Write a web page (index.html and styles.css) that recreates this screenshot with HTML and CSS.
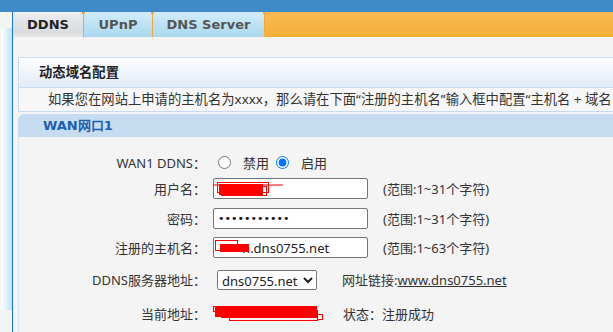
FILE: index.html
```html
<!DOCTYPE html>
<html lang="zh-CN">
  <head>
    <meta charset="UTF-8" />
    <title>DDNS</title>
    <link rel="stylesheet" href="styles.css">
  </head>
  <body>
    <div class="top-bar"></div>
    <div class="main">
      <div class="sidebar"><div class="sidebar-strip"></div></div>
      <div class="content">
        <div class="tab-bar">
          <div class="tab tab-active">DDNS</div>
          <div class="tab">UPnP</div>
          <div class="tab tab-wide">DNS Server</div>
          <div class="tab-fill"></div>
        </div>

        <div class="panel">
          <div class="panel-title">动态域名配置</div>
          <div class="panel-desc">如果您在网站上申请的主机名为xxxx，那么请在下面“注册的主机名”输入框中配置“主机名 + 域名</div>
        </div>

        <div class="section">
          <div class="section-title">WAN网口1</div>
          <div class="section-body">
            <div class="form-row row-radio">
              <div class="form-label">WAN1 DDNS：</div>
              <div class="form-field">
                <input type="radio" name="ddns" class="radio" />
                <span class="radio-text">禁用</span>
                <input type="radio" name="ddns" class="radio" checked />
                <span class="radio-text">启用</span>
              </div>
            </div>

            <div class="form-row row-input">
              <div class="form-label">用户名：</div>
              <div class="form-field">
                <div class="input-wrap">
                  <input type="text" class="form-input" value="" />
                  <svg class="mark mark-user" width="76" height="16" viewBox="0 0 76 16">
                    <line x1="0" y1="4" x2="70" y2="4" stroke="#f00" stroke-width="1" />
                    <rect x="6" y="3" width="44" height="11" fill="#f00" />
                    <rect x="4.5" y="1.5" width="51" height="10" fill="none" stroke="#f00" />
                    <rect x="8.5" y="5.5" width="45" height="9" fill="none" stroke="#f00" />
                  </svg>
                </div>
                <span class="form-hint">(范围:1~31个字符)</span>
              </div>
            </div>

            <div class="form-row row-input row-tall">
              <div class="form-label">密码：</div>
              <div class="form-field">
                <input type="password" class="form-input form-password" value="abcdefghijk" />
                <span class="form-hint">(范围:1~31个字符)</span>
              </div>
            </div>

            <div class="form-row row-input">
              <div class="form-label">注册的主机名：</div>
              <div class="form-field">
                <div class="input-wrap">
                  <input type="text" class="form-input" value="nnnn.dns0755.net" />
                  <svg class="mark mark-host" width="40" height="16" viewBox="0 0 40 16">
                    <rect x="1" y="0" width="28" height="14" fill="#fff" />
                    <rect x="1.5" y="1.5" width="22" height="10" fill="none" stroke="#f00" />
                    <rect x="6" y="5" width="29" height="8" fill="#f00" />
                  </svg>
                </div>
                <span class="form-hint">(范围:1~63个字符)</span>
              </div>
            </div>

            <div class="form-row row-select">
              <div class="form-label">DDNS服务器地址：</div>
              <div class="form-field">
                <select class="form-select">
                  <option>dns0755.net</option>
                </select>
                <span class="form-link">网址链接:<a href="#">www.dns0755.net</a></span>
              </div>
            </div>

            <div class="form-row row-status">
              <div class="form-label">当前地址：</div>
              <div class="form-field">
                <svg class="mark-addr" width="112" height="18" viewBox="0 0 112 18">
                  <rect x="2" y="3" width="102" height="10" fill="#f00" />
                  <rect x="0.5" y="2.5" width="103" height="5" fill="none" stroke="#f00" />
                  <rect x="8.5" y="6.5" width="96" height="7" fill="none" stroke="#f00" />
                  <rect x="16.5" y="9.5" width="88" height="7" fill="none" stroke="#f00" />
                  <rect x="104.5" y="10.5" width="5" height="5" fill="none" stroke="#f00" />
                </svg>
                <span class="form-status">状态：注册成功</span>
              </div>
            </div>
          </div>
        </div>
      </div>
    </div>
  </body>
</html>
```

FILE: styles.css
```css
/* Page base */
body {
  margin: 0;
  background: #f4f4f4;
  font-family: "Noto Sans", "Noto Sans CJK SC", sans-serif;
  font-size: 13px;
  color: #333;
  overflow: hidden;
}

/* Blue strip along the top */
.top-bar {
  height: 12px;
  background: #3f8bc9;
}

.main {
  display: flex;
  height: 320px;
}

/* Left menu edge */
.sidebar {
  width: 12px;
  border-right: 1px solid #1a74ea;
  padding-top: 16px;
  box-sizing: content-box;
}

.sidebar-strip {
  height: 282px;
  margin-left: 1px;
  background: linear-gradient(to right, #ffffff 0%, #e4f4fb 40%, #bde3f3 100%);
}

.content {
  flex: 1;
  overflow: hidden;
}

/* Tabs */
.tab-bar {
  display: flex;
  height: 25px;
}

.tab {
  position: relative;
  width: 68px;
  line-height: 25px;
  text-align: center;
  font-family: "DejaVu Sans", Verdana, sans-serif;
  font-weight: bold;
  font-size: 13px;
  color: #555;
  background: linear-gradient(#d2ecf8, #a9d8ee);
  border-left: 1px solid #f2a93a;
}

/* small orange notch at the top of each separator */
.tab::before,
.tab-fill::before {
  content: "";
  position: absolute;
  top: 0;
  left: -2px;
  width: 3px;
  height: 2px;
  background: #f2a93a;
}

.tab-active {
  width: 70px;
  border-left: none;
  color: #222;
  background: linear-gradient(#f2f2f2 0%, #e6e8ea 20%, #d9dde0 80%, #e6e6e6 100%);
}

.tab-active::before {
  display: none;
}

.tab-wide {
  width: 111px;
}

.tab-fill {
  position: relative;
  flex: 1;
  background: linear-gradient(#f8bb52, #f6ae37);
  border-left: 1px solid #f2a93a;
}

/* Intro panel */
.panel {
  margin: 20px -20px 0 5px;
  border: 1px solid #c6daf1;
}

.panel-title {
  height: 29px;
  line-height: 29px;
  padding-left: 20px;
  font-size: 13.33px;
  font-weight: bold;
  color: #222;
  background: linear-gradient(#fdfeff, #e2ebf8);
  border-bottom: 1px solid #c6daf1;
}

.panel-desc {
  height: 23px;
  line-height: 23px;
  padding-left: 29px;
  font-size: 13.33px;
  white-space: nowrap;
  background: #f7f7f7;
}

/* WAN section */
.section {
  margin: 2px 0 0 5px;
}

.section-title {
  height: 23px;
  line-height: 23px;
  padding-left: 25px;
  font-family: "DejaVu Sans", Verdana, sans-serif;
  font-weight: bold;
  font-size: 13px;
  color: #1b5fb3;
  background: #c6dcf0;
  border-radius: 6px 0 0 0;
}

.section-body {
  border-left: 1px solid #d8e5f4;
  padding-top: 14px;
  height: 200px;
}

/* Form rows */
.form-row {
  display: flex;
  align-items: center;
}

.row-radio {
  height: 23px;
}

.row-input {
  height: 29px;
}

.row-tall {
  height: 30px;
}

.row-select {
  height: 35px;
}

.row-status {
  height: 32px;
}

.form-label {
  width: 187px;
  text-align: right;
  white-space: nowrap;
}

.form-field {
  display: flex;
  align-items: center;
  margin-left: 7px;
}

.radio {
  margin: 0 12px 0 5px;
  width: 13px;
  height: 13px;
}

.radio-text {
  margin-right: 2px;
}

.input-wrap {
  position: relative;
}

.form-input {
  display: block;
  width: 155px;
  height: 21px;
  box-sizing: border-box;
  margin: 0;
  padding: 0 4px;
  border: 1px solid #767676;
  border-radius: 2px;
  background: #fff;
  font-family: "Noto Sans", sans-serif;
  font-size: 13px;
  color: #222;
}

.form-password {
  font-family: "DejaVu Sans", sans-serif;
  font-size: 11px;
  color: #111;
}

/* Red redaction marks over the inputs */
.mark {
  position: absolute;
  left: 0;
}

.mark-user {
  top: 3px;
}

.mark-host {
  top: 2px;
  left: 1px;
}

.form-hint {
  margin-left: 15px;
  white-space: nowrap;
}

.form-select {
  width: 100px;
  height: 20px;
  margin: 0 0 0 4px;
  font-family: "Noto Sans", sans-serif;
  font-size: 13px;
  color: #222;
}

.form-link {
  margin-left: 25px;
  white-space: nowrap;
}

.form-link a {
  color: #333;
}

.mark-addr {
  display: block;
}

.form-status {
  margin-left: 18px;
  white-space: nowrap;
}
```
